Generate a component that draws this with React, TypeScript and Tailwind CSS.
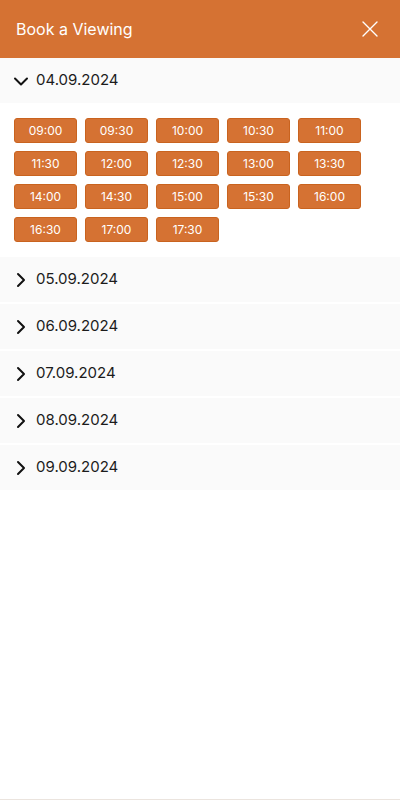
import React, { useState } from 'react'

const dates = ['04.09.2024', '05.09.2024', '06.09.2024', '07.09.2024', '08.09.2024', '09.09.2024']
const slots = [
  '09:00', '09:30', '10:00', '10:30', '11:00',
  '11:30', '12:00', '12:30', '13:00', '13:30',
  '14:00', '14:30', '15:00', '15:30', '16:00',
  '16:30', '17:00', '17:30',
]

function Chevron({ open }: { open: boolean }) {
  return open ? (
    <svg width="16" height="16" viewBox="0 0 16 16" fill="none" className="shrink-0">
      <path d="M2 5.5l6 6 6-6" stroke="#111" strokeWidth="2" strokeLinecap="round" strokeLinejoin="round" />
    </svg>
  ) : (
    <svg width="16" height="16" viewBox="0 0 16 16" fill="none" className="shrink-0">
      <path d="M5 2l6 6-6 6" stroke="#111" strokeWidth="2" strokeLinecap="round" strokeLinejoin="round" />
    </svg>
  )
}

function DayRow({ date, open, onToggle }: { date: string; open: boolean; onToggle: () => void }) {
  return (
    <div className="mb-[2px]">
      <button
        onClick={onToggle}
        className="flex h-[45px] w-full items-center gap-[7px] bg-[#fafafa] pl-[13px] text-left"
      >
        <Chevron open={open} />
        <span className="text-[15px] text-[#1c1c1c]">{date}</span>
      </button>
      {open && (
        <div className="bg-white px-[14px] pb-[13px] pt-[15px]">
          <div className="grid w-fit grid-cols-5 gap-x-[8px] gap-y-[8px]">
            {slots.map((s) => (
              <button
                key={s}
                className="h-[25px] w-[63px] rounded-[3px] border border-[#c9631f] bg-[#d57233] text-[12px] text-white"
              >
                {s}
              </button>
            ))}
          </div>
        </div>
      )}
    </div>
  )
}

export default function App() {
  const [openDay, setOpenDay] = useState<string | null>(dates[0])
  return (
    <div className="flex h-[800px] w-[400px] flex-col border-b border-[#ebe4de] bg-white font-['Inter',sans-serif]">
      <div className="flex h-[58px] shrink-0 items-center justify-between bg-[#d57233] pl-4 pr-[22px]">
        <span className="text-[16px] text-white">Book a Viewing</span>
        <svg width="16" height="16" viewBox="0 0 16 16" fill="none">
          <path d="M1 1l14 14M15 1L1 15" stroke="#fff" strokeWidth="1.4" strokeLinecap="round" />
        </svg>
      </div>
      <div>
        {dates.map((d) => (
          <DayRow
            key={d}
            date={d}
            open={openDay === d}
            onToggle={() => setOpenDay(openDay === d ? null : d)}
          />
        ))}
      </div>
    </div>
  )
}
